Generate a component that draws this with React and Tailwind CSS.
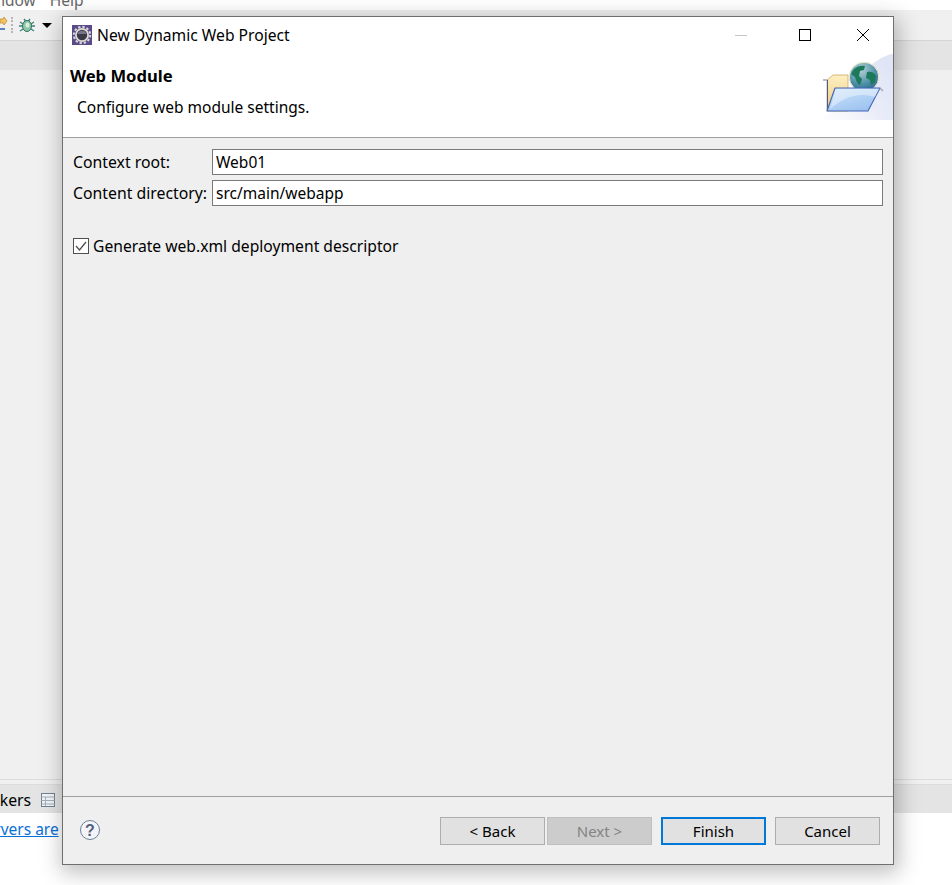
import React from "react";

const font = { fontFamily: '"Noto Sans", "Noto Sans CJK SC", sans-serif' };

function Gear() {
  return (
    <svg width="20" height="20" viewBox="0 0 20 20">
      <rect width="20" height="20" fill="#5b4a8a" />
      <circle cx="10" cy="10" r="8.200" fill="none" stroke="#d8d6d2" strokeWidth="2" strokeDasharray="2.400 1.900" />
      <circle cx="10" cy="10" r="7" fill="#dedcd8" />
      <circle cx="10" cy="10" r="5.200" fill="#3c3a48" />
      <path d="M5.500 9h9a4.800 4.800 0 0 0-9 0z" fill="#77758a" />
    </svg>
  );
}

function Bug() {
  return (
    <svg width="16" height="17" viewBox="0 0 16 17" fill="none">
      <path d="M1 5l3 2M15 5l-3 2M0 9h3M16 9h-3M1 14l3-2M15 14l-3-2M5 2l1.500 2M11 2L9.500 4" stroke="#3b8378" strokeWidth="1.300" />
      <ellipse cx="8" cy="9" rx="4.500" ry="5.500" fill="#8fc7a8" stroke="#2f6f66" />
      <ellipse cx="8.500" cy="8" rx="2" ry="2.500" fill="#dcefd8" />
    </svg>
  );
}

function Banner() {
  return (
    <svg width="74" height="66" viewBox="0 0 74 66" className="block">
      <defs>
        <linearGradient id="bg" x1="0" y1="1" x2="1" y2="0.300">
          <stop offset="0" stopColor="#ffffff" />
          <stop offset="0.600" stopColor="#e9ecf8" />
          <stop offset="1" stopColor="#e0e5f6" />
        </linearGradient>
        <linearGradient id="fold" x1="0" y1="0" x2="0.600" y2="1">
          <stop offset="0" stopColor="#cfe6fd" />
          <stop offset="1" stopColor="#9dc3ef" />
        </linearGradient>
        <linearGradient id="back" x1="0" y1="0" x2="0" y2="1">
          <stop offset="0" stopColor="#fdf0c4" />
          <stop offset="1" stopColor="#edc97c" />
        </linearGradient>
        <radialGradient id="globe" cx="0.400" cy="0.250" r="0.850">
          <stop offset="0" stopColor="#b4d3d8" />
          <stop offset="0.600" stopColor="#4b8ea6" />
          <stop offset="1" stopColor="#245e80" />
        </radialGradient>
      </defs>
      <path d="M74 -1C58 5 48 12 40 24C32 40 20 56 0 66H74z" fill="url(#bg)" />
      <path d="M8 26l6-5h15v36H8z" fill="url(#back)" stroke="#c9a95e" strokeWidth="0.800" />
      <path d="M4 26h4" stroke="#a5a9b5" strokeWidth="1.500" />
      <path d="M8.500 26v31" stroke="#4b5a96" strokeWidth="1" />
      <circle cx="45" cy="23" r="14.700" fill="url(#globe)" stroke="#f6ecc8" strokeWidth="1" />
      <path d="M35 15c3-3 8-4 11-3l-1 4-4 1-1 5 3 3-2 6c-3-1-4-5-5-8l-4-3zM48 18c4-1 7 0 9 4l-1 6-4 3-1-5-4-2z" fill="#1c7a5a" />
      <path d="M16 34h45L49 57H8z" fill="url(#fold)" stroke="#4465b5" strokeWidth="1.100" strokeLinejoin="round" />
      <path d="M61 34l3 3" stroke="#a5a9b5" strokeWidth="1.500" fill="none" />
      <path d="M17 35h43l-4 8C40 38 26 42 11 55z" fill="#ffffff" opacity="0.400" />
    </svg>
  );
}

function Field({ label, value }) {
  return (
    <div className="flex items-center h-[26px]">
      <div className="w-[149px] pl-[10px] shrink-0 text-[15.800px] leading-[26px] whitespace-nowrap">{label}</div>
      <div className="flex-1 h-[26px] bg-white border border-[#7a7a7a] pl-[3px] text-[15.500px] leading-[24px]">{value}</div>
    </div>
  );
}

function Btn({ children, className = "" }) {
  return (
    <div className={"w-[105px] h-[28px] flex items-center justify-center text-[15px] " + className}>{children}</div>
  );
}

export default function App() {
  return (
    <div className="relative w-[952px] h-[885px] overflow-hidden bg-white flex flex-col text-black" style={font}>
      <div className="h-[10px] overflow-hidden bg-white shrink-0">
        <div className="-mt-[10px] -ml-[23px] flex gap-[14px] text-[15.500px] leading-[20px] text-[#666]">
          <span>Window</span>
          <span>Help</span>
        </div>
      </div>
      <div className="h-[31px] shrink-0 bg-[#f0f0f0] border-b border-[#d4d4d4] flex items-center">
        <svg width="8" height="22" viewBox="0 0 8 22" className="shrink-0">
          <path d="M0 5h3l1-2 3 4-3 4-1-2H0z" fill="#f2c260" stroke="#b98a30" strokeWidth="0.700" />
          <path d="M0 15h5" stroke="#2a5fa8" strokeWidth="1.500" />
        </svg>
        <div className="ml-[3px] w-[3px] h-[16px] border-l-2 border-dotted border-[#b5b5b5]" />
        <div className="ml-[5px]"><Bug /></div>
        <div className="ml-[7px] w-0 h-0 border-l-[5px] border-r-[5px] border-t-[5px] border-l-transparent border-r-transparent border-t-black" />
      </div>
      <div className="h-[29px] shrink-0 bg-[#e4e4e4]" />
      <div className="flex-1 bg-[#f0f0f0] border-b border-[#dcdcdc]" />
      <div className="h-[5px] shrink-0 bg-[#f0f0f0] border-b border-[#dcdcdc]" />
      <div className="h-[28px] shrink-0 bg-[#e4e4e4] flex items-center">
        <span className="-ml-[30px] mt-[4px] text-[15.800px]">Markers</span>
        <svg width="14" height="14" viewBox="0 0 14 14" className="ml-[10px] mt-[1px]">
          <rect x="0.500" y="0.500" width="13" height="13" fill="#f4f4f4" stroke="#6f8296" />
          <path d="M0.500 4h13M0.500 7.500h13M0.500 11h13M4.500 4v9" stroke="#9fb0c0" />
        </svg>
      </div>
      <div className="h-[72px] shrink-0 bg-white">
        <a className="block mt-[6px] -ml-[23px] text-[15.500px] leading-[20px] text-[#0a6fd6] underline whitespace-nowrap">Servers are</a>
      </div>

      <div className="absolute left-[62px] top-[16px] w-[832px] h-[849px] border border-[#6f6f6f] bg-[#efefef] flex flex-col shadow-[2px_5px_20px_3px_rgba(0,0,0,0.25)]">
        <div className="h-[121px] shrink-0 bg-white border-b border-[#a0a0a0] flex flex-col relative">
          <div className="h-[36px] flex items-center pl-[9px] shrink-0">
            <Gear />
            <span className="ml-[5px] mt-[2px] text-[15.650px]">New Dynamic Web Project</span>
            <div className="ml-auto flex items-center">
              <div className="w-[12px] h-px bg-[#c4c4c4] mr-[52px]" />
              <div className="w-[12px] h-[12px] border border-black mr-[46px]" />
              <svg width="12" height="12" viewBox="0 0 12 12" className="mr-[24px]">
                <path d="M0 0l12 12M12 0L0 12" stroke="black" strokeWidth="1" />
              </svg>
            </div>
          </div>
          <div className="pl-[7px] mt-[12px] text-[16.600px] font-bold leading-[22px]">Web Module</div>
          <div className="pl-[14px] mt-[9px] text-[15.500px] leading-[22px]">Configure web module settings.</div>
          <div className="absolute right-0 top-[37px]"><Banner /></div>
        </div>
        <div className="flex-1 flex flex-col pt-[11px] pr-[10px] gap-[5px]">
          <Field label="Context root:" value="Web01" />
          <Field label="Content directory:" value="src/main/webapp" />
          <div className="flex items-center mt-[27px] pl-[10px] h-[16px]">
            <div className="w-[16px] h-[16px] bg-white border border-[#4f4f4f] flex items-center justify-center">
              <svg width="12" height="10" viewBox="0 0 12 10" fill="none">
                <path d="M1 5l3.500 4L11 1" stroke="#505050" strokeWidth="1.300" />
              </svg>
            </div>
            <span className="ml-[4px] mt-[2px] text-[15.670px]">Generate web.xml deployment descriptor</span>
          </div>
        </div>
        <div className="h-[68px] shrink-0 border-t border-[#a0a0a0] flex items-start pt-[20px] pl-[17px] pr-[13px]">
          <svg width="20" height="20" viewBox="0 0 20 20" className="mt-[3px]">
            <circle cx="10" cy="10" r="9.500" fill="#f4f5f8" stroke="#6d7f99" />
            <text x="10" y="16" textAnchor="middle" fontSize="16" fontWeight="700" fill="#55617a" style={{ fontFamily: '"Liberation Sans", sans-serif' }}>?</text>
          </svg>
          <div className="ml-auto flex">
            <Btn className="bg-[#e1e1e1] border border-[#adadad]">&lt; Back</Btn>
            <Btn className="ml-[2px] bg-[#cccccc] border border-[#bfbfbf] text-[#838383]">Next &gt;</Btn>
            <Btn className="ml-[9px] bg-[#e1e1e1] border-2 border-[#0078d7]">Finish</Btn>
            <Btn className="ml-[9px] bg-[#e1e1e1] border border-[#adadad]">Cancel</Btn>
          </div>
        </div>
      </div>
    </div>
  );
}
